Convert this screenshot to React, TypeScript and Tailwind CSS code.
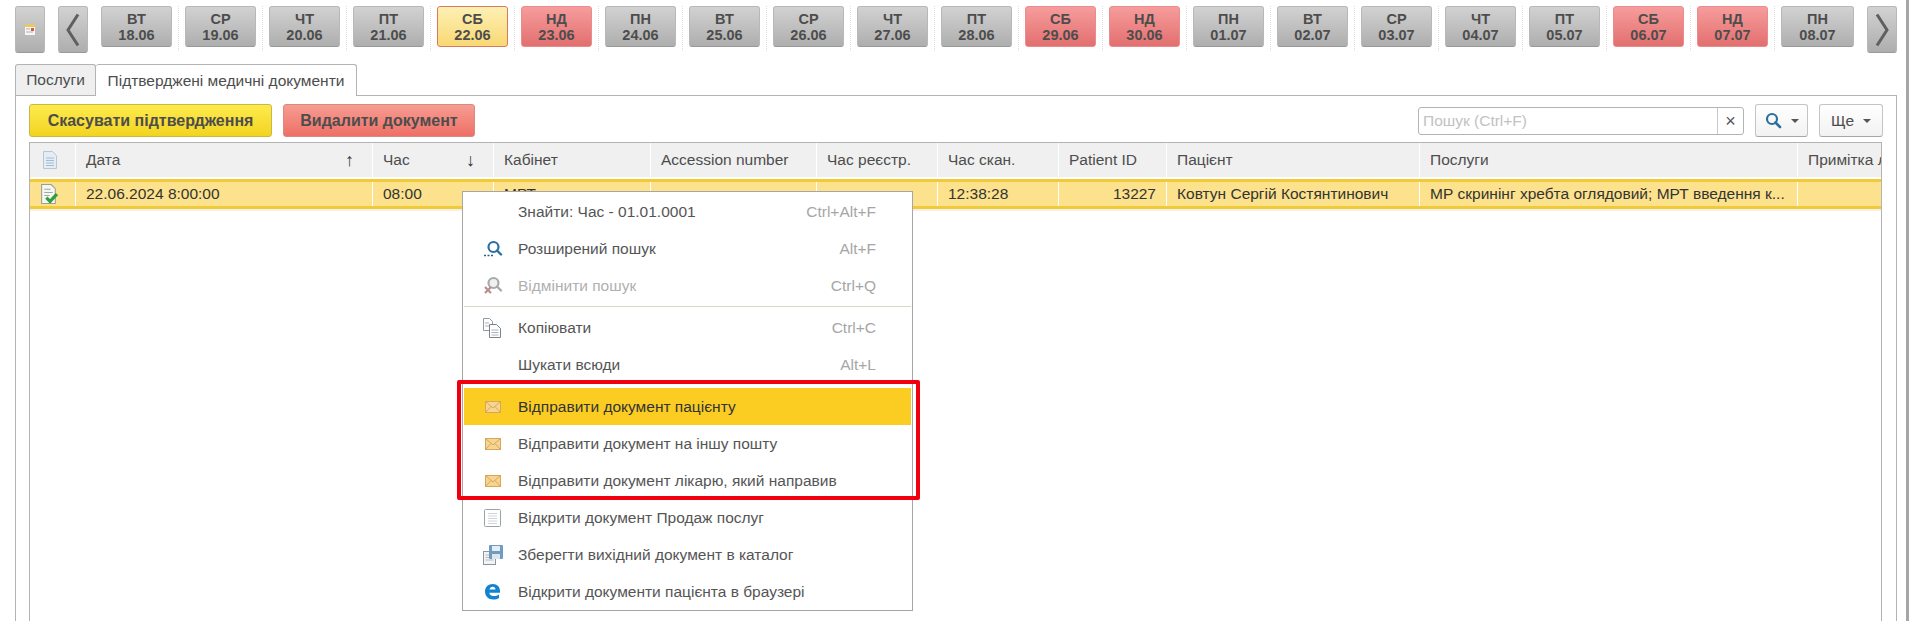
import type { ReactNode } from 'react';

type Day = { name: string; date: string; kind?: 'today' | 'off' };

const days: Day[] = [
  { name: 'ВТ', date: '18.06' },
  { name: 'СР', date: '19.06' },
  { name: 'ЧТ', date: '20.06' },
  { name: 'ПТ', date: '21.06' },
  { name: 'СБ', date: '22.06', kind: 'today' },
  { name: 'НД', date: '23.06', kind: 'off' },
  { name: 'ПН', date: '24.06' },
  { name: 'ВТ', date: '25.06' },
  { name: 'СР', date: '26.06' },
  { name: 'ЧТ', date: '27.06' },
  { name: 'ПТ', date: '28.06' },
  { name: 'СБ', date: '29.06', kind: 'off' },
  { name: 'НД', date: '30.06', kind: 'off' },
  { name: 'ПН', date: '01.07' },
  { name: 'ВТ', date: '02.07' },
  { name: 'СР', date: '03.07' },
  { name: 'ЧТ', date: '04.07' },
  { name: 'ПТ', date: '05.07' },
  { name: 'СБ', date: '06.07', kind: 'off' },
  { name: 'НД', date: '07.07', kind: 'off' },
  { name: 'ПН', date: '08.07' },
];

const grayBtn = 'border border-[#b8b8b8] border-b-[#999] bg-gradient-to-b from-[#d2d2d2] to-[#aeaeae]';

function DayButton({ day, last }: { day: Day; last: boolean }) {
  const look =
    day.kind === 'today'
      ? 'border-[#d9785f] bg-gradient-to-b from-[#fdf0b4] to-[#f9d873]'
      : day.kind === 'off'
        ? 'border-[#ea8c8c] bg-gradient-to-b from-[#f69c9c] to-[#e26f6f]'
        : grayBtn;
  return (
    <div className={`flex h-[41px] shrink-0 flex-col items-center justify-center rounded-[3px] border text-[14.5px] leading-[16px] font-bold text-[#4d4d4d] ${last ? 'w-[73px]' : 'w-[71px]'} ${look}`}>
      <span>{day.name}</span>
      <span>{day.date}</span>
    </div>
  );
}

const columns = [
  { title: 'Дата', width: 'w-[297px]', value: '22.06.2024 8:00:00', arrow: '↑' },
  { title: 'Час', width: 'w-[121px]', value: '08:00', arrow: '↓' },
  { title: 'Кабінет', width: 'w-[157px]', value: 'МРТ' },
  { title: 'Accession number', width: 'w-[166px]', value: '' },
  { title: 'Час реєстр.', width: 'w-[121px]', value: '' },
  { title: 'Час скан.', width: 'w-[121px]', value: '12:38:28' },
  { title: 'Patient ID', width: 'w-[108px]', value: '13227', right: true },
  { title: 'Пацієнт', width: 'w-[253px]', value: 'Ковтун Сергій Костянтинович' },
  { title: 'Послуги', width: 'w-[378px]', value: 'МР скринінг хребта оглядовий; МРТ введення к...' },
  { title: 'Примітка лікаря', width: 'w-[85px]', value: '' },
];

function Chevron({ flip }: { flip?: boolean }) {
  return (
    <svg width="14" height="34" viewBox="0 0 14 34">
      <path d={flip ? 'M2 1.500L12 17 2 32.500' : 'M12 1.500L2 17l10 15.500'} fill="none" stroke="#5f5f5f" strokeWidth="3" />
    </svg>
  );
}

function DocIcon() {
  return (
    <svg width="16" height="18" viewBox="0 0 16 18">
      <path d="M1.5.5h9l4 4v13h-13z" fill="#e3edf6" stroke="#b9c7d4" />
      <path d="M4 7h8M4 9.500h8M4 12h8M4 14.500h8" stroke="#a9bccd" />
    </svg>
  );
}

function DocCheckIcon() {
  return (
    <svg width="18" height="20" viewBox="0 0 17 19">
      <path d="M1.5.5h9l4 4v14h-13z" fill="#f7f7f2" stroke="#9a9f94" />
      <path d="M4 5h6M4 8h8M4 11h5" stroke="#9da6a8" />
      <path d="M6 13l3.500 3.500L16 9.500" fill="none" stroke="#2f9e3f" strokeWidth="3" />
    </svg>
  );
}

function SearchIcon({ color = '#2a6f9f', size = 18 }: { color?: string; size?: number }) {
  return (
    <svg width={size} height={size} viewBox="0 0 18 18">
      <circle cx="8" cy="7" r="5" fill="none" stroke={color} strokeWidth="2.2" />
      <path d="M11.500 10.500l4.500 4.500" stroke={color} strokeWidth="2.6" strokeLinecap="round" />
    </svg>
  );
}

function AdvSearchIcon() {
  return (
    <svg width="20" height="18" viewBox="0 0 20 18">
      <circle cx="10.5" cy="7" r="5" fill="none" stroke="#2a6f9f" strokeWidth="2.2" />
      <path d="M14 10.500l4 4" stroke="#2a6f9f" strokeWidth="2.4" strokeLinecap="round" />
      <path d="M1 15.500h2M4.500 15.500h2M8 15.500h2" stroke="#2a5f8f" strokeWidth="1.6" />
    </svg>
  );
}

function CancelSearchIcon() {
  return (
    <svg width="20" height="20" viewBox="0 0 20 20">
      <circle cx="10.5" cy="7" r="5" fill="#eef0f1" stroke="#a9a9a9" strokeWidth="2.2" />
      <path d="M14 10.500l4 4" stroke="#a9a9a9" strokeWidth="2.4" strokeLinecap="round" />
      <path d="M2 11l6 6M8 11l-6 6" stroke="#b98d92" strokeWidth="2.2" />
    </svg>
  );
}

function CopyIcon() {
  return (
    <svg width="20" height="20" viewBox="0 0 20 20">
      <path d="M.5.5h6l3 3v9h-9z" fill="#fff" stroke="#8f9aa3" />
      <path d="M6.500 6.500h7l4 4v9h-11z" fill="#fff" stroke="#76828c" />
      <path d="M8.500 12h7M8.500 14.500h7M8.500 17h7M2 5h4M2 8h4" stroke="#a9b2ba" />
    </svg>
  );
}

function MailIcon() {
  return (
    <svg width="16" height="12" viewBox="0 0 16 12">
      <rect x=".5" y=".5" width="15" height="11" fill="#f6d592" stroke="#d9a556" />
      <path d="M.5.5L8 7l7.500-6.500M.5 11.500L6 5.500M15.500 11.500L10 5.500" fill="none" stroke="#d9a556" />
    </svg>
  );
}

function PageIcon() {
  return (
    <svg width="18" height="18" viewBox="0 0 18 18">
      <rect x=".5" y=".5" width="16" height="17" rx="1" fill="#fff" stroke="#9aa2aa" />
      <path d="M4 4.500h9M4 7h9M4 9.500h9M4 12h9M4 14.500h9" stroke="#d0d4d9" />
    </svg>
  );
}

function SaveIcon() {
  return (
    <svg width="20" height="20" viewBox="0 0 20 20">
      <rect x=".5" y="6.500" width="12" height="13" fill="#f1f3f5" stroke="#8d96a0" />
      <path d="M2.500 10h8M2.500 12.500h8M2.500 15h8" stroke="#b5bcc3" />
      <rect x="6" y="0" width="14" height="14" rx="1" fill="#6f9cc0" />
      <rect x="9" y="1" width="8" height="5" fill="#e6eef5" />
      <rect x="9" y="9" width="8" height="5" fill="#dbe6ef" />
    </svg>
  );
}

function EdgeIcon() {
  return (
    <svg width="17" height="17" viewBox="0 0 17 17">
      <path
        d="M1 8.500C1 4 4.300 1 8.800 1c4.500 0 7.200 3 7.200 7.300v1.400H5.300c.3 2.200 2 3.300 4.300 3.300 2 0 3.800-.6 5.400-1.600v3.500c-1.600 1-3.500 1.600-5.800 1.600C4.300 16.500 1 13.200 1 8.500zm4.400-1.900h6.200c-.1-1.900-1.200-2.900-2.900-2.900-1.700 0-2.900 1.100-3.300 2.900z"
        fill="#1283d0"
      />
    </svg>
  );
}

function CalendarIcon() {
  return (
    <svg width="10" height="11" viewBox="0 0 10 11">
      <rect width="10" height="11" fill="#f6f6f2" />
      <rect width="10" height="3" fill="#e8c766" />
      <rect x="6" y="4" width="3" height="3" fill="#d9584a" />
      <path d="M1 5h4M1 8h7" stroke="#b0b0b0" />
    </svg>
  );
}

function Caret() {
  return <span className="h-0 w-0 border-x-[4px] border-t-[4px] border-x-transparent border-t-[#555]" />;
}

function MenuRow({ icon, label, hotkey, active, muted }: { icon?: ReactNode; label: string; hotkey?: string; active?: boolean; muted?: boolean }) {
  return (
    <div className={`flex h-[37px] items-center pr-[35px] ${active ? 'bg-[#fbcd23] text-[#333]' : muted ? 'text-[#b0b0b0]' : 'text-[#555]'}`}>
      <span className="flex w-[54px] shrink-0 justify-center pl-[3px]">{icon}</span>
      <span className="flex-1">{label}</span>
      {hotkey ? <span className="text-[#a6a6a6]">{hotkey}</span> : null}
    </div>
  );
}

function ContextMenu() {
  return (
    <div className="absolute top-[191px] left-[462px] z-10 w-[451px] border border-[#a6a6a6] bg-white px-[1px] pt-[1px]">
      <MenuRow label="Знайти: Час - 01.01.0001" hotkey="Ctrl+Alt+F" />
      <MenuRow icon={<AdvSearchIcon />} label="Розширений пошук" hotkey="Alt+F" />
      <MenuRow icon={<CancelSearchIcon />} label="Відмінити пошук" hotkey="Ctrl+Q" muted />
      <div className="my-[2px] border-t border-[#d8d4c8]" />
      <MenuRow icon={<CopyIcon />} label="Копіювати" hotkey="Ctrl+C" />
      <MenuRow label="Шукати всюди" hotkey="Alt+L" />
      <div className="pt-[5px]">
        <MenuRow icon={<MailIcon />} label="Відправити документ пацієнту" active />
        <MenuRow icon={<MailIcon />} label="Відправити документ на іншу пошту" />
        <MenuRow icon={<MailIcon />} label="Відправити документ лікарю, який направив" />
      </div>
      <MenuRow icon={<PageIcon />} label="Відкрити документ Продаж послуг" />
      <MenuRow icon={<SaveIcon />} label="Зберегти вихідний документ в каталог" />
      <MenuRow icon={<EdgeIcon />} label="Відкрити документи пацієнта в браузері" />
    </div>
  );
}

export default function App() {
  return (
    <div className="relative h-[621px] w-[1909px] overflow-hidden border-r-[3px] border-[#a6a6a6] bg-white font-['Liberation_Sans',Arial,sans-serif] text-[15.5px] text-[#4d4d4d]">
      <div className="flex h-[64px] items-start pt-[6px] pl-[15px]">
        <div className={`flex h-[47px] w-[30px] shrink-0 items-center justify-center rounded-[3px] ${grayBtn}`}>
          <CalendarIcon />
        </div>
        <div className={`ml-[13px] flex h-[47px] w-[30px] shrink-0 items-center justify-center rounded-[3px] ${grayBtn}`}>
          <Chevron />
        </div>
        <div className="ml-[13px] flex">
          {days.map((day, i) => (
            <div key={day.date} className={`flex ${i < days.length - 1 ? 'w-[84px]' : ''}`}>
              <DayButton day={day} last={i === days.length - 1} />
              {i < days.length - 1 ? <span className="ml-[6px] h-[45px] border-l border-dotted border-[#dcdcdc]" /> : null}
            </div>
          ))}
        </div>
        <div className={`ml-[13px] flex h-[47px] w-[30px] shrink-0 items-center justify-center rounded-[3px] ${grayBtn}`}>
          <Chevron flip />
        </div>
      </div>

      <div className="ml-[15px] flex h-[31px] items-stretch">
        <div className="flex w-[81px] items-center justify-center rounded-t-[3px] border border-b-0 border-[#b3b3b3] bg-[#efefef]">Послуги</div>
        <div className="relative z-[1] -mb-[1px] flex w-[261px] items-center justify-center rounded-t-[3px] border border-b-0 border-l-0 border-[#b3b3b3] bg-white">
          Підтверджені медичні документи
        </div>
      </div>

      <div className="ml-[15px] h-[526px] w-[1882px] border border-b-0 border-[#b3b3b3] px-[13px] pt-[8px]">
        <div className="flex h-[33px] items-stretch">
          <div className="flex w-[243px] items-center justify-center rounded-[3px] border border-[#c9b74a] bg-gradient-to-b from-[#fdeb4b] to-[#f3d41c] text-[16px] font-bold text-[#4d4d4d]">
            Скасувати підтвердження
          </div>
          <div className="ml-[11px] flex w-[192px] items-center justify-center rounded-[3px] border border-[#d88a80] bg-gradient-to-b from-[#f69c92] to-[#ee6f66] text-[16px] font-bold text-[#4d4d4d]">
            Видалити документ
          </div>
          <div className="ml-auto flex items-start">
            <div className="mt-[3px] flex h-[28px] w-[326px] items-center rounded-[3px] border border-[#b3b3b3] bg-white">
              <span className="flex-1 pl-[4px] text-[#c2c2c2]">Пошук (Ctrl+F)</span>
              <span className="flex h-full w-[26px] items-center justify-center border-l border-[#c9c9c9] text-[18px] leading-none text-[#555]">×</span>
            </div>
            <div className="ml-[11px] flex h-[33px] w-[53px] items-center justify-center gap-[9px] rounded-[3px] border border-[#c4c4c4] border-b-[#a6a6a6] bg-gradient-to-b from-white to-[#f2f2f2]">
              <SearchIcon />
              <Caret />
            </div>
            <div className="ml-[11px] flex h-[33px] w-[64px] items-center justify-center gap-[9px] rounded-[3px] border border-[#c4c4c4] border-b-[#a6a6a6] bg-gradient-to-b from-white to-[#f2f2f2]">
              Ще
              <Caret />
            </div>
          </div>
        </div>

        <div className="mt-[5px] h-[479px] w-[1853px] overflow-hidden border-x border-t border-[#b3b3b3]">
          <div className="flex h-[34px] bg-[#f0f0f0]">
            <div className="flex w-[46px] shrink-0 items-center justify-center border-r border-white pr-[5px]">
              <DocIcon />
            </div>
            {columns.map((col) => (
              <div key={col.title} className={`${col.width} flex shrink-0 items-center justify-between overflow-hidden border-r border-white px-[10px] whitespace-nowrap`}>
                <span>{col.title}</span>
                {col.arrow ? <span className="pr-[8px] text-[18px] leading-none text-[#333]">{col.arrow}</span> : null}
              </div>
            ))}
          </div>
          <div className="mt-[2px] flex h-[30px] border-y-[3px] border-[#f2c937] bg-[#fce28c] text-[#333]">
            <div className="flex w-[46px] shrink-0 items-center justify-center border-r border-white pr-[7px]">
              <DocCheckIcon />
            </div>
            {columns.map((col) => (
              <div key={col.title} className={`${col.width} flex shrink-0 items-center overflow-hidden border-r border-white px-[10px] whitespace-nowrap ${col.right ? 'justify-end' : ''}`}>
                {col.value}
              </div>
            ))}
          </div>
          <div className="h-[2px] bg-[#f3f1e4]" />
        </div>
      </div>

      <ContextMenu />
      <div className="absolute top-[380px] left-[457px] z-20 h-[120px] w-[463px] rounded-[2px] border-[4px] border-[#f0000f]" />
    </div>
  );
}
